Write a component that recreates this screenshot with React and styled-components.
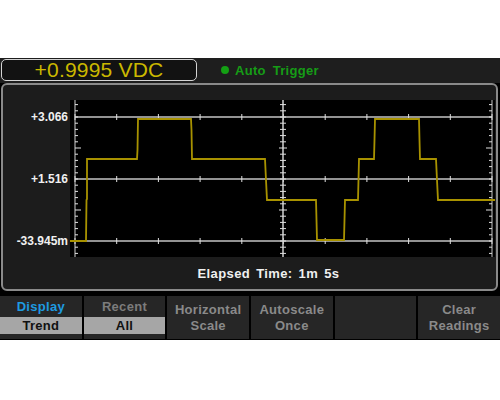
import React from 'react';
import styled, { createGlobalStyle } from 'styled-components';

const GlobalStyle = createGlobalStyle`
  body {
    margin: 0;
    background: #ffffff;
    font-family: "Liberation Sans", Arial, sans-serif;
  }
`;

const W = 425;
const H = 157;
const LEFT = 5;
const RIGHT = 422;
const MID = 213;
const STEP = (RIGHT - LEFT) / 10;
const LINES = [17, 79, 141];

const trace = [
  [0, 141], [16, 141], [16.5, 100], [17, 99], [17, 59], [67, 59], [67.5, 50], [68, 19],
  [121, 19], [121.5, 30], [122, 59], [195, 59], [196, 80], [197, 100], [246, 100],
  [246.5, 120], [247, 140], [274, 140], [274.5, 120], [275, 100], [288, 100],
  [288.5, 80], [289, 59], [304, 59], [304.5, 40], [305, 19], [349, 19], [349.5, 40],
  [350, 59], [366, 59], [367, 80], [368, 100], [425, 100],
];

function Chart() {
  const vTicks = [];
  for (let y = LINES[0] - 18.6; y <= H; y += 6.2) vTicks.push(y);
  const major = [48, 110];

  return (
    <svg width={W} height={H} viewBox={`0 0 ${W} ${H}`}>
      <rect width={W} height={H} fill="#000" />
      {LINES.map((y) => (
        <g key={y}>
          <line x1={LEFT} y1={y} x2={RIGHT} y2={y} stroke="#c4c4c4" strokeWidth="1.6" />
          {Array.from({ length: 11 }, (_, i) => (
            <line key={i} x1={LEFT + i * STEP} y1={y - 3} x2={LEFT + i * STEP} y2={y + 3} stroke="#e0e0e0" strokeWidth="1" />
          ))}
        </g>
      ))}
      <line x1={LEFT} y1={0} x2={LEFT} y2={H} stroke="#d0d0d0" strokeWidth="1" />
      <line x1={MID} y1={0} x2={MID} y2={H} stroke="#c4c4c4" strokeWidth="1.6" />
      <line x1={RIGHT} y1={0} x2={RIGHT} y2={H} stroke="#c4c4c4" strokeWidth="1" />
      {vTicks.map((y, i) => {
        const big = major.some((m) => Math.abs(m - y) < 2);
        return (
          <g key={i}>
            <line x1={LEFT} y1={y} x2={LEFT + (big ? 6 : 3)} y2={y} stroke="#e0e0e0" strokeWidth="1" />
            <line x1={MID - (big ? 4 : 3)} y1={y} x2={MID + (big ? 4 : 3)} y2={y} stroke="#e0e0e0" strokeWidth="1" />
            <line x1={RIGHT - (big ? 6 : 3)} y1={y} x2={RIGHT} y2={y} stroke="#e0e0e0" strokeWidth="1" />
          </g>
        );
      })}
      <polyline
        points={trace.map((p) => p.join(',')).join(' ')}
        fill="none"
        stroke="#a89200"
        strokeWidth="1.8"
      />
    </svg>
  );
}

const Page = styled.div`
  width: 500px;
  padding-top: 58px;
`;

const Screen = styled.div`
  background: #000;
  height: 282px;
  display: flex;
  flex-direction: column;
`;

const StatusBar = styled.div`
  height: 25px;
  box-sizing: border-box;
  padding: 1px 1px 2px;
  background: #1e1e1e;
  display: flex;
  align-items: center;
`;

const Readout = styled.div`
  width: 196px;
  height: 22px;
  box-sizing: border-box;
  border: 1px solid #d4d4d4;
  border-radius: 5px;
  background: #121212;
  color: #cbb800;
  font-size: 21px;
  line-height: 20px;
  text-align: center;
  letter-spacing: 0.2px;
`;

const Trigger = styled.div`
  margin-left: 24px;
  display: flex;
  align-items: center;
  gap: 6px;
  color: #169c16;
  font-size: 13px;
  font-weight: bold;
  word-spacing: 3px;
  letter-spacing: 0.3px;
`;

const Dot = styled.span`
  width: 8px;
  height: 8px;
  border-radius: 50%;
  background: #14a014;
`;

const Panel = styled.div`
  margin: 0 2px 0 1px;
  height: 208px;
  box-sizing: border-box;
  border: 2px solid #8a8a8a;
  border-radius: 6px;
  background: #1c1c1c;
  display: flex;
  flex-direction: column;
`;

const PlotRow = styled.div`
  padding-top: 15px;
  display: flex;
`;

const Scale = styled.div`
  width: 67px;
  box-sizing: border-box;
  padding: 11px 2px 0 0;
  display: flex;
  flex-direction: column;
  align-items: flex-end;
  gap: 50px;
`;

const ScaleLabel = styled.div`
  height: 12px;
  line-height: 12px;
  color: #f0f0f0;
  font-size: 12px;
  font-weight: bold;
`;

const Elapsed = styled.div`
  flex: 1;
  display: flex;
  align-items: center;
  justify-content: center;
  padding-left: 38px;
  color: #f0f0f0;
  font-size: 13px;
  font-weight: bold;
  letter-spacing: 0.4px;
  word-spacing: 2px;
`;

const SoftKeys = styled.div`
  margin-top: 5px;
  height: 43px;
  display: grid;
  grid-template-columns: repeat(6, 1fr);
  gap: 2px;
`;

const Key = styled.div`
  background: #262626;
  display: flex;
  flex-direction: column;
  justify-content: ${(p) => (p.$split ? 'flex-start' : 'center')};
  align-items: stretch;
  padding-bottom: ${(p) => (p.$split ? '5px' : '0')};
  text-align: center;
  font-size: 13px;
  font-weight: bold;
  letter-spacing: 0.3px;
  line-height: 16px;
  color: #8a8a8a;
`;

const KeyTitle = styled.div`
  height: 21px;
  line-height: 22px;
  color: ${(p) => (p.$active ? '#1e9be0' : '#7c7c7c')};
`;

const KeyValue = styled.div`
  height: 17px;
  line-height: 18px;
  background: #a6a6a6;
  color: #111;
`;

export default function App() {
  return (
    <Page>
      <GlobalStyle />
      <Screen>
        <StatusBar>
          <Readout>+0.9995 VDC</Readout>
          <Trigger>
            <Dot />
            Auto Trigger
          </Trigger>
        </StatusBar>
        <Panel>
          <PlotRow>
            <Scale>
              <ScaleLabel>+3.066</ScaleLabel>
              <ScaleLabel>+1.516</ScaleLabel>
              <ScaleLabel>-33.945m</ScaleLabel>
            </Scale>
            <Chart />
          </PlotRow>
          <Elapsed>Elapsed Time: 1m 5s</Elapsed>
        </Panel>
        <SoftKeys>
          <Key $split>
            <KeyTitle $active>Display</KeyTitle>
            <KeyValue>Trend</KeyValue>
          </Key>
          <Key $split>
            <KeyTitle>Recent</KeyTitle>
            <KeyValue>All</KeyValue>
          </Key>
          <Key>Horizontal<br />Scale</Key>
          <Key>Autoscale<br />Once</Key>
          <Key />
          <Key>Clear<br />Readings</Key>
        </SoftKeys>
      </Screen>
    </Page>
  );
}
